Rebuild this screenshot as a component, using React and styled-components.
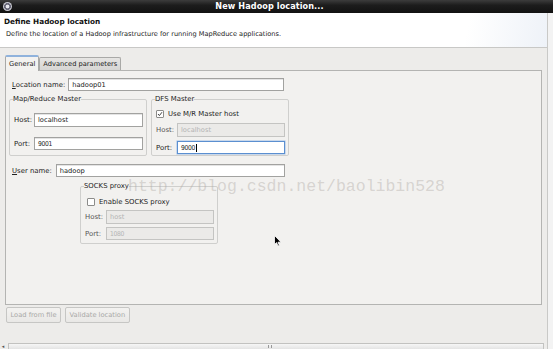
import React from "react";
import styled, { createGlobalStyle } from "styled-components";

const Global = createGlobalStyle`
  html, body { margin: 0; padding: 0; }
  body { font-family: "DejaVu Sans", "Noto Sans", sans-serif; color: #2e3436; }
  * { box-sizing: border-box; }
`;

const Window = styled.div`
  position: relative;
  width: 553px;
  height: 349px;
  overflow: hidden;
  display: flex;
  flex-direction: column;
  background: #edecea;
`;

const TitleBar = styled.div`
  height: 13px;
  flex: none;
  display: grid;
  grid-template-columns: 14px 1fr 14px;
  align-items: center;
  background: linear-gradient(#3c3c3c, #1c1c1c 40%, #121212);
  color: #fff;
`;

const TitleIcon = styled.div`
  width: 9px;
  height: 9px;
  margin-left: 3px;
  border-radius: 50%;
  background: radial-gradient(circle, #e8e8ee 0 30%, #6a6a7a 32% 55%, #c8c8d0 57% 100%);
`;

const Title = styled.div`
  text-align: center;
  font-weight: bold;
  font-size: 8.1px;
  line-height: 13px;
  padding-right: 14px;
  letter-spacing: 0.1px;
`;

const Content = styled.div`
  flex: 1;
  display: flex;
`;

const Main = styled.div`
  width: 548px;
  display: flex;
  flex-direction: column;
  border-right: 1px solid #c9c9c7;
`;

const RightStrip = styled.div`
  flex: 1;
  background: #f3f3f3;
`;

const Header = styled.div`
  height: 35px;
  background: linear-gradient(100deg, #ffffff 85%, #eef2f8 100%);
  border-bottom: 1px solid #c8c8c6;
  padding: 4px 0 0 4px;
`;

const HeaderTitle = styled.div`
  font-weight: bold;
  font-size: 7.3px;
  line-height: 9px;
  color: #111;
`;

const HeaderDesc = styled.div`
  font-size: 6.6px;
  line-height: 9px;
  margin-top: 4px;
  margin-left: 2px;
  color: #222;
`;

const Body = styled.div`
  padding: 6px 5px 0 5px;
  display: flex;
  flex-direction: column;
`;

const Tabs = styled.div`
  display: flex;
  align-items: flex-end;
  height: 16px;
`;

const Tab = styled.div`
  font-size: 6.7px;
  color: #222;
  height: ${(p) => (p.$active ? "16px" : "13px")};
  padding: 0 3px;
  display: flex;
  align-items: center;
  border: 1px solid #a9a9a7;
  border-bottom: none;
  border-radius: 2px 2px 0 0;
  background: ${(p) => (p.$active ? "#f3f2f0" : "linear-gradient(#e6e5e3, #d6d5d3)")};
  border-top: ${(p) => (p.$active ? "2px solid #8fb2dc" : "1px solid #a9a9a7")};
  margin-bottom: ${(p) => (p.$active ? "-1px" : "0")};
  position: relative;
  z-index: ${(p) => (p.$active ? 1 : 0)};
`;

const Panel = styled.div`
  height: 235px;
  border: 1px solid #b4b4b2;
  background: #f2f1ef;
  padding: 7px 0 0 4px;
  display: flex;
  flex-direction: column;
`;

const Row = styled.div`
  display: flex;
  align-items: center;
  gap: ${(p) => p.$gap || 3}px;
  margin-left: ${(p) => p.$indent || 0}px;
  margin-top: ${(p) => p.$top || 0}px;
`;

const Label = styled.span`
  font-size: 6.9px;
  color: ${(p) => (p.$dim ? "#555" : "#222")};
  white-space: nowrap;
  width: ${(p) => (p.$w ? p.$w + "px" : "auto")};
`;

const Input = styled.div`
  width: ${(p) => p.$w}px;
  height: ${(p) => p.$h || 13}px;
  border: 1px solid ${(p) => (p.$focus ? "#5b8fd0" : p.$disabled ? "#c4c4c2" : "#a2a2a0")};
  background: ${(p) => (p.$disabled ? "#ebeae8" : "#fff")};
  font-size: 6.7px;
  color: ${(p) => (p.$disabled ? "#b4b4b4" : "#222")};
  padding-left: 3px;
  display: flex;
  align-items: center;
  box-shadow: ${(p) => (p.$focus ? "0 0 0 0.5px #9fc0e8" : p.$disabled ? "none" : "inset 0 1px 0 #e4e4e4")};
  font-family: ${(p) => (p.$small ? '"DejaVu Sans Condensed", "DejaVu Sans", sans-serif' : "inherit")};
  letter-spacing: ${(p) => (p.$small ? "-0.3px" : "0")};
`;

const Caret = styled.span`
  display: inline-block;
  width: 0.7px;
  height: 8px;
  background: #000;
  margin-left: 0.5px;
`;

const GroupsRow = styled.div`
  display: flex;
  gap: 4px;
  margin-top: ${(p) => p.$top || 0}px;
  margin-left: ${(p) => p.$left || 0}px;
`;

const Group = styled.fieldset`
  margin: 0;
  width: 138px;
  height: ${(p) => p.$h}px;
  border: 1px solid #cfcfcd;
  border-radius: 2px;
  padding: 0 0 0 3px;
  display: flex;
  flex-direction: column;
  gap: 2px;
  min-width: 0;
`;

const Legend = styled.legend`
  font-size: 6.9px;
  color: #222;
  padding: 0;
  margin-left: 0;
  line-height: 8px;
`;

const CheckBox = styled.span`
  width: 8px;
  height: 8px;
  border: 1px solid #8c8c8a;
  background: #fff;
  border-radius: 1px;
  display: inline-flex;
  align-items: center;
  justify-content: center;
  flex: none;
`;

const Buttons = styled.div`
  display: flex;
  gap: 4px;
  margin: 2px 0 0 1px;
`;

const Button = styled.div`
  height: 16px;
  padding: 0 3.5px;
  border: 1px solid #c6c6c4;
  border-radius: 2px;
  background: linear-gradient(#f3f2f0, #e9e8e6);
  color: #a9a9a7;
  font-size: 6.7px;
  display: flex;
  align-items: center;
`;

const Spacer = styled.div`
  flex: 1;
`;

const HScroll = styled.div`
  height: 6px;
  display: flex;
  align-items: center;
`;

const ScrollTrack = styled.div`
  position: relative;
  flex: 1;
  height: 6px;
  border: 1px solid #c2c2c0;
  border-bottom: none;
  background: linear-gradient(#f6f6f6, #e4e4e4);
  margin: 0 3px 0 2px;
`;

const Grip = styled.div`
  position: absolute;
  left: 259px;
  top: 1px;
  width: 4px;
  height: 3px;
  border-left: 1px solid #999;
  border-right: 1px solid #999;
`;

const Arrow = styled.span`
  font-size: 5px;
  color: #555;
  width: 6px;
  text-align: center;
`;

const Watermark = styled.div`
  position: absolute;
  left: 128px;
  top: 177px;
  font-family: "Liberation Mono", "DejaVu Sans Mono", monospace;
  font-size: 16.5px;
  color: rgba(170, 165, 160, 0.4);
  pointer-events: none;
  white-space: nowrap;
`;

const Cursor = styled.svg`
  position: absolute;
  left: 274px;
  top: 235px;
`;

export default function App() {
  return (
    <>
      <Global />
      <Window>
        <TitleBar>
          <TitleIcon />
          <Title>New Hadoop location...</Title>
          <span />
        </TitleBar>
        <Content>
          <Main>
            <Header>
              <HeaderTitle>Define Hadoop location</HeaderTitle>
              <HeaderDesc>
                Define the location of a Hadoop infrastructure for running MapReduce applications.
              </HeaderDesc>
            </Header>
            <Body>
              <Tabs>
                <Tab $active>General</Tab>
                <Tab>Advanced parameters</Tab>
              </Tabs>
              <Panel>
                <Row $gap={3} $indent={2}>
                  <Label>
                    <u>L</u>ocation name:
                  </Label>
                  <Input $w={216}>hadoop01</Input>
                </Row>
                <GroupsRow $top={4} $left={-1}>
                  <Group $h={61}>
                    <Legend>Map/Reduce Master</Legend>
                    <Row $gap={2} $indent={1} $top={10}>
                      <Label $w={18}>Host:</Label>
                      <Input $w={109} $h={14}>localhost</Input>
                    </Row>
                    <Row $gap={2} $indent={1} $top={8}>
                      <Label $w={18}>Port:</Label>
                      <Input $w={109} $h={13} $small>9001</Input>
                    </Row>
                  </Group>
                  <Group $h={61}>
                    <Legend>DFS Master</Legend>
                    <Row $gap={4} $indent={1} $top={7}>
                      <CheckBox>
                        <svg width="6" height="6" viewBox="0 0 6 6">
                          <path d="M1 3 L2.4 4.6 L5 1.2" fill="none" stroke="#444" strokeWidth="1" />
                        </svg>
                      </CheckBox>
                      <Label>Use M/R Master host</Label>
                    </Row>
                    <Row $gap={2} $indent={1} $top={3}>
                      <Label $w={19} $dim>Host:</Label>
                      <Input $w={108} $h={14} $disabled>localhost</Input>
                    </Row>
                    <Row $gap={2} $indent={1} $top={2}>
                      <Label $w={19}>Port:</Label>
                      <Input $w={108} $h={13} $focus $small>
                        9000<Caret />
                      </Input>
                    </Row>
                  </Group>
                </GroupsRow>
                <Row $gap={4} $indent={2} $top={8}>
                  <Label>
                    <u>U</u>ser name:
                  </Label>
                  <Input $w={229}>hadoop</Input>
                </Row>
                <GroupsRow $left={70} $top={5}>
                  <Group $h={62}>
                    <Legend>SOCKS proxy</Legend>
                    <Row $gap={4} $indent={3} $top={8}>
                      <CheckBox />
                      <Label>Enable SOCKS proxy</Label>
                    </Row>
                    <Row $gap={2} $indent={1} $top={2}>
                      <Label $w={19} $dim>Host:</Label>
                      <Input $w={108} $h={14} $disabled>host</Input>
                    </Row>
                    <Row $gap={2} $indent={1} $top={1}>
                      <Label $w={19} $dim>Port:</Label>
                      <Input $w={108} $h={13} $disabled $small>1080</Input>
                    </Row>
                  </Group>
                </GroupsRow>
              </Panel>
              <Buttons>
                <Button>Load from file</Button>
                <Button>Validate location</Button>
              </Buttons>
            </Body>
            <Spacer />
            <HScroll>
              <Arrow>◂</Arrow>
              <ScrollTrack>
                <Grip />
              </ScrollTrack>
            </HScroll>
          </Main>
          <RightStrip />
        </Content>
        <Watermark>http://blog.csdn.net/baolibin528</Watermark>
        <Cursor width="8" height="12" viewBox="0 0 8 12">
          <path d="M0.5 0.5 L0.5 9.5 L2.6 7.6 L4 11 L5.4 10.4 L4 7.2 L7 7.2 Z" fill="#000" stroke="#fff" strokeWidth="0.8" />
        </Cursor>
      </Window>
    </>
  );
}
